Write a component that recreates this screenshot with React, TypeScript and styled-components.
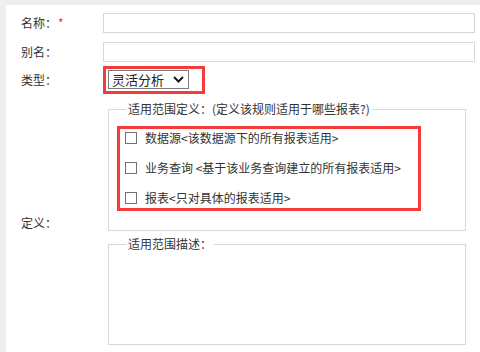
import React from "react";
import styled, { createGlobalStyle } from "styled-components";

const GlobalStyle = createGlobalStyle`
  html, body {
    margin: 0;
    padding: 0;
    background: #efeeec;
  }
  body {
    font-family: "Noto Sans CJK SC", "Microsoft YaHei", sans-serif;
    font-size: 12px;
    color: #333;
  }
`;

const Panel = styled.div`
  margin: 5px 0 0 6px;
  padding: 8px 5px 0 15px;
  background: #fff;
  height: 347px;
  box-sizing: border-box;
  overflow: hidden;
`;

const Row = styled.div<{ $gap?: number }>`
  display: grid;
  grid-template-columns: 82px 372px;
  align-items: center;
  margin-top: ${(p) => p.$gap ?? 0}px;
`;

const Label = styled.label`
  font-size: 12px;
  line-height: 16px;
  color: #333;
  white-space: nowrap;
`;

const Required = styled.span`
  color: #e8343a;
  margin-left: 1px;
`;

const Input = styled.input`
  display: block;
  width: 100%;
  height: 20px;
  box-sizing: border-box;
  border: 1px solid #d7d7d7;
  padding: 0 6px;
  font: inherit;
  outline: none;
`;

const Highlight = styled.div`
  border: 3px solid #f53c3c;
  box-sizing: border-box;
`;

const TypeHighlight = styled(Highlight)`
  justify-self: start;
  padding: 1px 13px 2px 2px;
`;

const SelectBox = styled.div`
  width: 81px;
  height: 19px;
  box-sizing: border-box;
  border: 1px solid #7d7d7d;
  display: flex;
  align-items: center;
  justify-content: space-between;
  padding: 0 4px 0 3px;
  font-size: 13px;
  color: #222;
  line-height: 17px;
`;

const FieldCol = styled.div`
  padding-left: 5px;
  display: flex;
  flex-direction: column;
  gap: 5px;
`;

const Fieldset = styled.fieldset<{ $height?: number }>`
  margin: 0;
  width: 358px;
  box-sizing: border-box;
  border: 1px solid #d7d7d7;
  padding: 9px 8px 19px 8px;
  min-width: 0;
  ${(p) => (p.$height ? `height: ${p.$height}px;` : "")}
`;

const Legend = styled.legend`
  margin-left: 9px;
  padding: 0 2px;
  font-size: 12px;
  line-height: 16px;
  color: #333;
`;

const ScopeHighlight = styled(Highlight)`
  width: 304px;
  padding: 0 5px 2px 5px;
  display: flex;
  flex-direction: column;
  gap: 13px;
`;

const OptionRow = styled.label`
  display: flex;
  align-items: center;
  gap: 8px;
  height: 17px;
  font-size: 12px;
  color: #333;
  white-space: nowrap;
`;

const Check = styled.span`
  width: 12px;
  height: 12px;
  box-sizing: border-box;
  border: 1px solid #707070;
  background: #fff;
  flex: none;
`;

const options = [
  "数据源<该数据源下的所有报表适用>",
  "业务查询 <基于该业务查询建立的所有报表适用>",
  "报表<只对具体的报表适用>",
];

const App: React.FC = () => {
  return (
    <>
      <GlobalStyle />
      <Panel>
        <Row>
          <Label>
            名称：<Required>*</Required>
          </Label>
          <Input />
        </Row>
        <Row $gap={9}>
          <Label>别名：</Label>
          <Input />
        </Row>
        <Row $gap={4}>
          <Label>类型：</Label>
          <TypeHighlight>
            <SelectBox>
              <span>灵活分析</span>
              <svg width="11" height="7" viewBox="0 0 11 7">
                <path d="M1 1 L5.5 5.5 L10 1" fill="none" stroke="#1a1a1a" strokeWidth="2" />
              </svg>
            </SelectBox>
          </TypeHighlight>
        </Row>
        <Row $gap={7}>
          <Label>定义：</Label>
          <FieldCol>
            <Fieldset>
              <Legend>适用范围定义：(定义该规则适用于哪些报表?)</Legend>
              <ScopeHighlight>
                {options.map((o) => (
                  <OptionRow key={o}>
                    <Check />
                    {o}
                  </OptionRow>
                ))}
              </ScopeHighlight>
            </Fieldset>
            <Fieldset $height={109}>
              <Legend>适用范围描述：</Legend>
            </Fieldset>
          </FieldCol>
        </Row>
      </Panel>
    </>
  );
};

export default App;
